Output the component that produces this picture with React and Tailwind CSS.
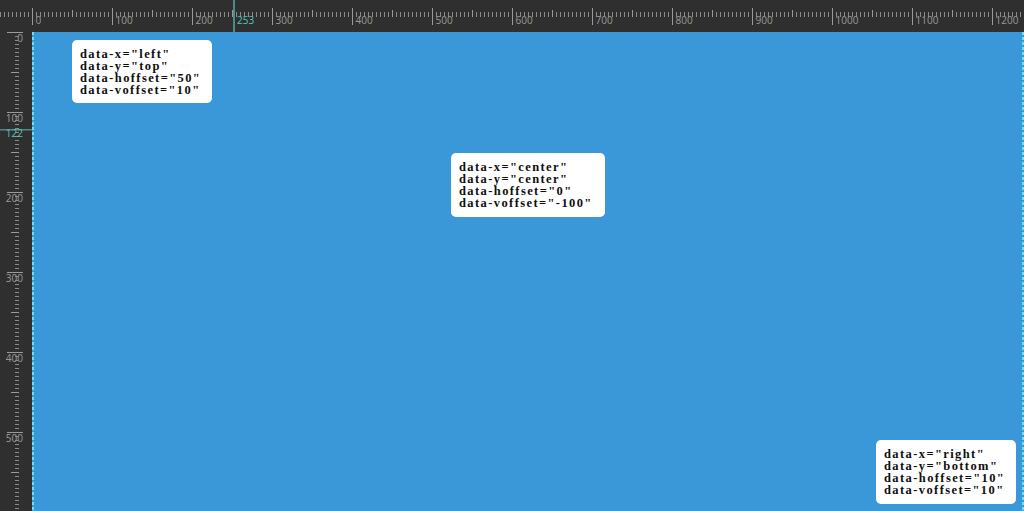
const SCALE = 0.8;
const ORIGIN = 32;

function TopRuler() {
  const ticks = [];
  for (let u = -40; u <= 1240; u += 5) {
    const x = ORIGIN + u * SCALE + 0.5;
    if (u % 100 === 0) {
      ticks.push(<line key={u} x1={x} x2={x} y1={8} y2={25} stroke="#9a9a9a" />);
      ticks.push(
        <text key={`t${u}`} x={x + 3} y={24} fontSize="10" fill="#9a9a9a" fontFamily="'Open Sans', sans-serif">
          {u}
        </text>
      );
    } else if (u % 50 === 0) {
      ticks.push(<line key={u} x1={x} x2={x} y1={10} y2={17} stroke="#9a9a9a" />);
    } else {
      ticks.push(<line key={u} x1={x} x2={x} y1={12} y2={17} stroke="#8a8a8a" />);
    }
  }
  return (
    <svg width="1024" height="32" className="block shrink-0 bg-[#2f2f2f]">
      {ticks}
      {/* cursor marker */}
      <rect x={233} y={0} width={2} height={32} fill="#4b8c8a" />
      <text x={237} y={24} fontSize="10" fill="#55c4bb" fontFamily="'Open Sans', sans-serif">
        253
      </text>
    </svg>
  );
}

function LeftRuler() {
  const ticks = [];
  for (let u = 0; u <= 595; u += 5) {
    const y = u * SCALE + 0.5;
    if (u % 100 === 0) {
      ticks.push(<line key={u} x1={7} x2={23} y1={y} y2={y} stroke="#9a9a9a" />);
      ticks.push(
        <text key={`t${u}`} x={23} y={y + 9} fontSize="10" textAnchor="end" fill="#9a9a9a" fontFamily="'Open Sans', sans-serif">
          {u}
        </text>
      );
    } else if (u % 50 === 0) {
      ticks.push(<line key={u} x1={11} x2={19} y1={y} y2={y} stroke="#9a9a9a" />);
    } else {
      ticks.push(<line key={u} x1={15} x2={19} y1={y} y2={y} stroke="#8a8a8a" />);
    }
  }
  return (
    <svg width="32" height="479" className="block shrink-0 bg-[#2f2f2f]">
      {ticks}
      <rect x={0} y={97} width={32} height={1.5} fill="#4b8c8a" />
      <text x={23} y={105} fontSize="10" textAnchor="end" fill="#55c4bb" fontFamily="'Open Sans', sans-serif">
        122
      </text>
    </svg>
  );
}

function Caption({ lines, className }) {
  return (
    <div
      className={`absolute rounded-[5px] bg-white pl-2 pt-[8px] font-['Liberation_Serif',serif] text-[12.5px] leading-[12px] font-bold tracking-[1.4px] text-[#0f0f0f] ${className}`}
    >
      {lines.map((l) => (
        <div key={l} className="whitespace-nowrap">
          {l}
        </div>
      ))}
    </div>
  );
}

export default function App() {
  return (
    <div className="flex h-[511px] w-[1024px] flex-col overflow-hidden bg-[#2f2f2f]">
      <TopRuler />
      <div className="flex flex-1">
        <LeftRuler />
        <div className="relative flex-1 bg-[#3a98d9]">
          {/* slide edge guides */}
          <div className="absolute top-0 bottom-0 left-0 w-[2px] bg-[repeating-linear-gradient(to_bottom,#62e4f3_0_3px,transparent_3px_5px)]" />
          <div className="absolute top-0 right-0 bottom-0 w-[2px] bg-[repeating-linear-gradient(to_bottom,#62e4f3_0_3px,transparent_3px_5px)]" />

          <Caption
            className="top-[8px] left-[40px] h-[63px] w-[140px]"
            lines={['data-x="left"', 'data-y="top"', 'data-hoffset="50"', 'data-voffset="10"']}
          />
          <Caption
            className="top-[121px] left-[419px] h-[64px] w-[154px]"
            lines={['data-x="center"', 'data-y="center"', 'data-hoffset="0"', 'data-voffset="-100"']}
          />
          <Caption
            className="top-[408px] left-[844px] h-[64px] w-[140px]"
            lines={['data-x="right"', 'data-y="bottom"', 'data-hoffset="10"', 'data-voffset="10"']}
          />
        </div>
      </div>
    </div>
  );
}
